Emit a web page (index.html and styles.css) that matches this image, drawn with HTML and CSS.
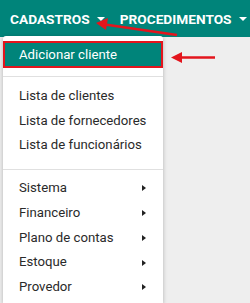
FILE: index.html
```html
<!DOCTYPE html>
<html lang="pt-BR">
<head>
    <meta charset="UTF-8">
    <meta name="viewport" content="width=device-width, initial-scale=1.0">
    <title>Cadastros</title>
    <link rel="stylesheet" href="styles.css">
</head>
<body>
    <nav class="topbar">
        <a href="#" class="topbar-item">CADASTROS <span class="caret"></span></a>
        <a href="#" class="topbar-item">PROCEDIMENTOS <span class="caret"></span></a>
    </nav>

    <ul class="dropdown">
        <li class="dropdown-item active">Adicionar cliente</li>
        <li class="divider"></li>
        <li class="dropdown-item">Lista de clientes</li>
        <li class="dropdown-item">Lista de fornecedores</li>
        <li class="dropdown-item">Lista de funcionários</li>
        <li class="divider divider-2"></li>
        <li class="dropdown-item submenu">Sistema <span class="sub-caret"></span></li>
        <li class="dropdown-item submenu">Financeiro <span class="sub-caret"></span></li>
        <li class="dropdown-item submenu">Plano de contas <span class="sub-caret"></span></li>
        <li class="dropdown-item submenu">Estoque <span class="sub-caret"></span></li>
        <li class="dropdown-item submenu">Provedor <span class="sub-caret"></span></li>
    </ul>

    <!-- setas de destaque -->
    <svg class="arrows" width="250" height="303" viewBox="0 0 250 303">
        <line x1="177" y1="35" x2="105" y2="24.5" stroke="#e3151d" stroke-width="2.5"/>
        <polygon points="96,23 108,18 106,30" fill="#e3151d"/>
        <line x1="215" y1="57.5" x2="180" y2="57.5" stroke="#e3151d" stroke-width="2.5"/>
        <polygon points="171,57.5 182,52 182,63" fill="#e3151d"/>
    </svg>
</body>
</html>
```

FILE: styles.css
```css
body {
    margin: 0;
    padding: 0;
    font-family: Roboto, "Liberation Sans", sans-serif;
    background-color: #eeeeee;
    height: 303px;
    overflow: hidden;
}

.topbar {
    background-color: #00847a;
    height: 37px;
    display: flex;
    align-items: center;
    padding-left: 10px;
    gap: 15px;
}

.topbar-item {
    color: #fff;
    text-decoration: none;
    font-weight: bold;
    font-size: 13.7px;
    display: flex;
    align-items: center;
    gap: 7px;
}

.caret {
    width: 0;
    height: 0;
    border-left: 4px solid transparent;
    border-right: 4px solid transparent;
    border-top: 4px solid #fff;
}

.dropdown {
    position: absolute;
    top: 36px;
    left: 3px;
    bottom: 0;
    width: 160px;
    margin: 0;
    padding: 5px 0 0;
    list-style: none;
    background-color: #fff;
    border-radius: 3px 3px 0 0;
    box-shadow: 0 1px 4px rgba(0,0,0,0.25);
    overflow: hidden;
}

.dropdown-item {
    font-size: 13.2px;
    color: #2a2a2a;
    line-height: 24.7px;
    padding-left: 16px;
    display: flex;
    align-items: center;
}

.dropdown-item.active {
    background-color: #00847a;
    color: #fff;
    outline: 2px solid #e3151d;
    margin: 2px 2px 0;
    line-height: 23px;
    padding-left: 14px;
}

.divider {
    height: 1px;
    background-color: #e0e0e0;
    margin: 10px 0 7px;
}

.divider-2 {
    margin: 11px 0 6px;
}

.sub-caret {
    margin-left: auto;
    margin-right: 17px;
    width: 0;
    height: 0;
    border-top: 3px solid transparent;
    border-bottom: 3px solid transparent;
    border-left: 4px solid #222;
}

.arrows {
    position: absolute;
    top: 0;
    left: 0;
    pointer-events: none;
}
```
